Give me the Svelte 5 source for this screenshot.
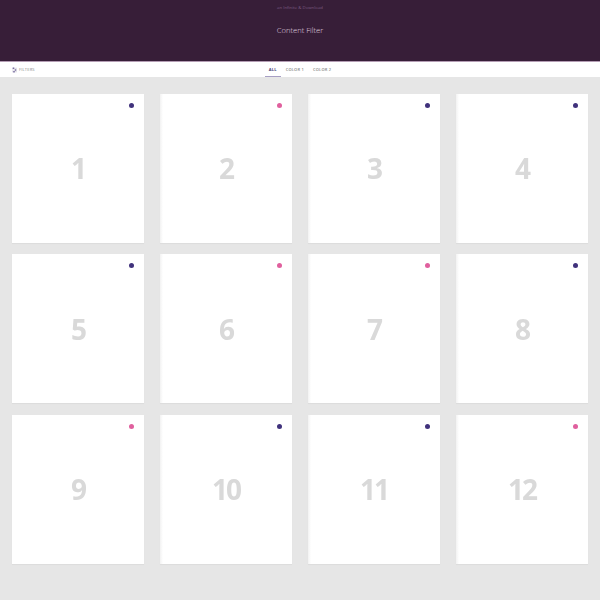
<script lang="ts">
  const tabs = ['All', 'Color 1', 'Color 2']
  const cards = [
    { n: 1, color: 'navy' }, { n: 2, color: 'pink' }, { n: 3, color: 'navy' }, { n: 4, color: 'navy' },
    { n: 5, color: 'navy' }, { n: 6, color: 'pink' }, { n: 7, color: 'pink' }, { n: 8, color: 'navy' },
    { n: 9, color: 'pink' }, { n: 10, color: 'navy' }, { n: 11, color: 'navy' }, { n: 12, color: 'pink' }
  ]
</script>

<div class="page">
  <header class="hero">
    <p class="crumb">an Infinite &amp; Download</p>
    <h1>Content Filter</h1>
  </header>

  <nav class="bar">
    <div class="filters">
      <svg viewBox="0 0 10 10" aria-hidden="true">
        <path d="M0 1.5h10M0 5h10M0 8.5h10" stroke="#b5b0c2" stroke-width="1" />
        <rect x="1.5" y="0" width="3" height="3" fill="#7a6da0" />
        <rect x="5.5" y="3.5" width="3" height="3" fill="#7a6da0" />
        <rect x="2.5" y="7" width="3" height="3" fill="#7a6da0" />
      </svg>
      <span>Filters</span>
    </div>
    <ul class="tabs">
      {#each tabs as tab, i}
        <li class:active={i === 0}>{tab}</li>
      {/each}
    </ul>
  </nav>

  <main class="grid">
    {#each cards as card}
      <article class="card">
        <span class="dot {card.color}"></span>
        <span class="num">{card.n}</span>
      </article>
    {/each}
  </main>
</div>

<style>
  :global(body) {
    margin: 0;
    background: #e6e6e6;
  }

  .page {
    height: 600px;
    overflow: hidden;
    font-family: 'Open Sans', sans-serif;
    background: #e6e6e6;
  }

  .hero {
    height: 61px;
    border-bottom: 1px solid #b49db4;
    background: #371e38;
    text-align: center;
    overflow: hidden;
  }

  .crumb {
    margin: 4px 0 0;
    font-size: 4.3px;
    line-height: 6px;
    color: #7b5a80;
  }

  h1 {
    margin: 14px 0 0;
    font-size: 7.6px;
    line-height: 12px;
    font-weight: 300;
    color: #e0d6e0;
  }

  .bar {
    position: relative;
    height: 15px;
    display: flex;
    align-items: center;
    justify-content: center;
    background: #fff;
  }

  .filters {
    position: absolute;
    left: 12px;
    top: 4px;
    display: flex;
    align-items: center;
    gap: 2px;
    height: 7px;
    font-size: 4px;
    color: #888;
    text-transform: uppercase;
    letter-spacing: 0.2px;
  }

  .filters svg {
    width: 5px;
    height: 6px;
  }

  .tabs {
    display: flex;
    gap: 1px;
    height: 100%;
    margin: 0;
    padding: 0;
    list-style: none;
    font-size: 4px;
    letter-spacing: 0.2px;
    text-transform: uppercase;
    color: #888;
  }

  .tabs li {
    position: relative;
    padding: 0 4px;
    line-height: 15px;
    font-weight: 600;
  }

  .tabs li.active {
    font-weight: 700;
    color: #4b3f78;
  }

  .tabs li.active::after {
    content: '';
    position: absolute;
    left: 0;
    right: 0;
    bottom: 0;
    height: 1px;
    background: #a79fc4;
  }

  .grid {
    display: grid;
    grid-template-columns: repeat(4, 132px);
    grid-auto-rows: 149px;
    column-gap: 16px;
    row-gap: 11.5px;
    padding: 16.5px 12px 0;
  }

  .card {
    position: relative;
    display: grid;
    place-items: center;
    background: #fff;
    box-shadow: 0 1px 1px rgba(0, 0, 0, 0.04);
  }

  /* soft fade down the left edge of the later columns */
  .card:not(:nth-child(4n + 1))::before {
    content: '';
    position: absolute;
    inset: 0 auto 0 0;
    width: 3px;
    background: linear-gradient(to right, #f2f2f2, #fff);
  }

  .num {
    font-size: 28px;
    font-weight: 700;
    letter-spacing: -2px;
    color: #d9d9d9;
    filter: blur(0.4px);
  }

  .dot {
    position: absolute;
    top: 9px;
    right: 10px;
    width: 5px;
    height: 5px;
    border-radius: 50%;
  }

  .navy { background: #40327c; }
  .pink { background: #e0609e; }
</style>
